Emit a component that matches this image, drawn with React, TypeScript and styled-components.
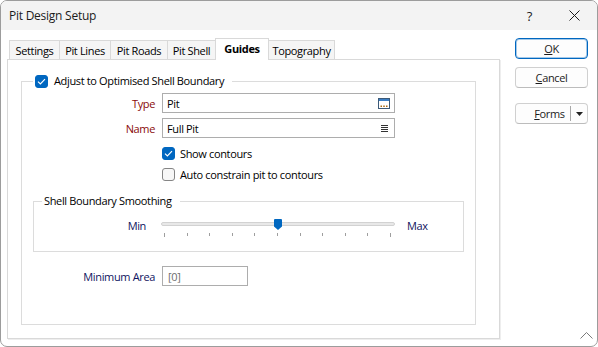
import React from 'react';
import styled, { createGlobalStyle } from 'styled-components';

const Global = createGlobalStyle`
  html, body { margin: 0; padding: 0; background: #ffffff; }
  body {
    font-family: "Open Sans", "Noto Sans", sans-serif;
    font-size: 11px;
    letter-spacing: -0.35px;
    color: #000;
  }
  * { box-sizing: border-box; }
`;

const Window = styled.div`
  position: relative;
  width: 598px;
  height: 347px;
  border: 1px solid #9c9c9c;
  border-radius: 7px;
  background: #ffffff;
  overflow: hidden;
  display: flex;
  flex-direction: column;
`;

const TitleBar = styled.div`
  height: 29px;
  flex: none;
  background: #f3f3f3;
  display: flex;
  align-items: center;
  justify-content: space-between;
  padding-left: 8px;
`;

const TitleText = styled.div`
  font-size: 12px;
  letter-spacing: -0.25px;
  color: #1b1b1b;
`;

const CaptionButtons = styled.div`
  display: flex;
  height: 100%;
`;

const CaptionButton = styled.div`
  width: 45px;
  height: 100%;
  display: flex;
  align-items: center;
  justify-content: center;
  font-size: 13px;
  color: #1b1b1b;
`;

const Body = styled.div`
  flex: 1;
  display: flex;
  padding: 8px 0 0 6px;
  gap: 15px;
`;

const LeftCol = styled.div`
  width: 493px;
  display: flex;
  flex-direction: column;
`;

const TabStrip = styled.div`
  height: 21px;
  display: flex;
  align-items: flex-end;
  padding-left: 2px;
  position: relative;
  z-index: 1;
`;

const Tab = styled.div<{ $w: number; $active?: boolean }>`
  width: ${(p) => p.$w}px;
  height: ${(p) => (p.$active ? 22 : 19)}px;
  margin-left: -1px;
  margin-bottom: ${(p) => (p.$active ? -1 : 0)}px;
  border: 1px solid #d9d9d9;
  border-bottom: none;
  background: ${(p) => (p.$active ? '#ffffff' : '#f5f5f5')};
  font-weight: ${(p) => (p.$active ? 700 : 400)};
  display: flex;
  align-items: center;
  justify-content: center;
  padding-bottom: ${(p) => (p.$active ? 2 : 0)}px;
  position: relative;
  z-index: ${(p) => (p.$active ? 2 : 1)};
  &:first-child { margin-left: 0; }
`;

const Panel = styled.div`
  height: 280px;
  border: 1px solid #d9d9d9;
  box-shadow: 1px 1px 0 #eeeeee;
  padding: 14px 0 0 13px;
`;

const GroupBox = styled.fieldset<{ $w: number; $pad: string }>`
  margin: 0;
  min-width: 0;
  width: ${(p) => p.$w}px;
  border: 1px solid #dcdcdc;
  padding: ${(p) => p.$pad};
`;

const Legend = styled.legend<{ $ml: number; $pl: number }>`
  margin-left: ${(p) => p.$ml}px;
  padding: 0 8px 0 ${(p) => p.$pl}px;
  height: 14px;
  line-height: 14px;
  display: flex;
  align-items: center;
  gap: 6px;
  color: #000;
`;

const Row = styled.div<{ $mt?: number }>`
  display: grid;
  grid-template-columns: 122px auto;
  column-gap: 7px;
  align-items: center;
  margin-top: ${(p) => p.$mt ?? 0}px;
`;

const Label = styled.div<{ $tone?: 'req' | 'opt' }>`
  text-align: right;
  color: ${(p) => (p.$tone === 'req' ? '#8a0a0a' : p.$tone === 'opt' ? '#0f1460' : '#000')};
`;

const Field = styled.div<{ $w: number; $muted?: boolean }>`
  width: ${(p) => p.$w}px;
  height: 20px;
  border: 1px solid #adadad;
  background: #fff;
  display: flex;
  align-items: center;
  justify-content: space-between;
  padding: 0 4px 0 4px;
  color: ${(p) => (p.$muted ? '#6d6d6d' : '#000')};
`;

const FieldText = styled.span<{ $pl?: number }>`
  padding-left: ${(p) => p.$pl ?? 0}px;
`;

const CheckLine = styled.label`
  height: 16px;
  display: flex;
  align-items: center;
  gap: 5px;
`;

const Box = styled.span<{ $on?: boolean }>`
  width: 13px;
  height: 13px;
  border-radius: 3px;
  flex: none;
  display: flex;
  align-items: center;
  justify-content: center;
  background: ${(p) => (p.$on ? '#0067c0' : '#f7f7f7')};
  border: 1px solid ${(p) => (p.$on ? '#0067c0' : '#858585')};
`;

const SliderRow = styled.div`
  display: grid;
  grid-template-columns: 112px 234px auto;
  column-gap: 15px;
  align-items: start;
`;

const SliderLabel = styled.div<{ $align: 'left' | 'right' }>`
  text-align: ${(p) => p.$align};
  line-height: 16px;
  margin-top: 1px;
  margin-left: ${(p) => (p.$align === 'left' ? -3 : 0)}px;
  color: #0f1460;
`;

const Slider = styled.div`
  position: relative;
  height: 21px;
  padding-top: 5px;
`;

const Track = styled.div`
  height: 4px;
  border: 1px solid #d2d2d2;
  background: #e8e8e8;
  border-radius: 2px;
`;

const Ticks = styled.div`
  margin-top: 7px;
  height: 4px;
  display: flex;
  justify-content: space-between;
  align-items: flex-start;
  padding: 0 4px 0 3px;
`;

const Tick = styled.span<{ $long?: boolean }>`
  width: 1px;
  height: ${(p) => (p.$long ? 4 : 3)}px;
  background: #9e9e9e;
`;

const Thumb = styled.svg`
  position: absolute;
  top: 2px;
  left: calc(50% - 4px);
`;

const ButtonCol = styled.div`
  width: 73px;
  display: flex;
  flex-direction: column;
`;

const Button = styled.div<{ $primary?: boolean; $mt?: number }>`
  height: 21px;
  margin-top: ${(p) => p.$mt ?? 0}px;
  border: 1px solid ${(p) => (p.$primary ? '#0067c0' : '#d0d0d0')};
  border-bottom-color: ${(p) => (p.$primary ? '#0067c0' : '#bcbcbc')};
  box-shadow: ${(p) => (p.$primary ? 'inset 0 0 0 1px rgba(0,103,192,0.35)' : 'none')};
  border-radius: 4px;
  background: #fdfdfd;
  display: flex;
  align-items: center;
  justify-content: center;
  color: #1b1b1b;
`;

const SplitMain = styled.span`
  flex: 1;
  text-align: center;
  padding-left: 13px;
`;

const SplitSep = styled.span`
  width: 1px;
  height: 15px;
  background: #a8a8a8;
`;

const SplitArrow = styled.span`
  width: 16px;
  display: flex;
  justify-content: center;
`;

const Grip = styled.svg`
  position: absolute;
  right: 4px;
  bottom: 7px;
`;

const Spacer = styled.div<{ $mt: number }>`
  margin-top: ${(p) => p.$mt}px;
`;

const Check = () => (
  <svg width="9" height="7" viewBox="0 0 9 7">
    <path d="M1 3.6 L3.4 6 L8 1.2" stroke="#fff" strokeWidth="1.2" fill="none" />
  </svg>
);

const BrowseIcon = () => (
  <svg width="12" height="11" viewBox="0 0 12 11">
    <rect x="0.5" y="0.5" width="11" height="10" fill="#fff" stroke="#3d5a78" />
    <rect x="1" y="1" width="10" height="2" fill="#3b7ec4" />
    <rect x="2.5" y="7.5" width="1.5" height="1.5" fill="#a86a12" />
    <rect x="5.25" y="7.5" width="1.5" height="1.5" fill="#a86a12" />
    <rect x="8" y="7.5" width="1.5" height="1.5" fill="#a86a12" />
  </svg>
);

const ListIcon = () => (
  <svg width="7" height="7" viewBox="0 0 7 7" style={{ marginRight: 2 }}>
    <rect x="0" y="0" width="7" height="1" fill="#333" />
    <rect x="0" y="2" width="7" height="1" fill="#333" />
    <rect x="0" y="4" width="7" height="1" fill="#333" />
    <rect x="0" y="6" width="7" height="1" fill="#333" />
  </svg>
);

const tabs: [string, number][] = [
  ['Settings', 51],
  ['Pit Lines', 52],
  ['Pit Roads', 58],
  ['Pit Shell', 49],
  ['Guides', 54],
  ['Topography', 67],
];

export default function App() {
  return (
    <>
      <Global />
      <Window>
        <TitleBar>
          <TitleText>Pit Design Setup</TitleText>
          <CaptionButtons>
            <CaptionButton>?</CaptionButton>
            <CaptionButton>
              <svg width="11" height="11" viewBox="0 0 11 11">
                <path d="M0.5 0.5 L10.5 10.5 M10.5 0.5 L0.5 10.5" stroke="#1b1b1b" strokeWidth="1" />
              </svg>
            </CaptionButton>
          </CaptionButtons>
        </TitleBar>
        <Body>
          <LeftCol>
            <TabStrip>
              {tabs.map(([t, w]) => (
                <Tab key={t} $w={w} $active={t === 'Guides'}>
                  {t}
                </Tab>
              ))}
            </TabStrip>
            <Panel>
              <GroupBox $w={455} $pad="5px 12px 38px 11px">
                <Legend $ml={0} $pl={2}>
                  <Box $on>
                    <Check />
                  </Box>
                  Adjust to Optimised Shell Boundary
                </Legend>
                <Row>
                  <Label $tone="req">Type</Label>
                  <Field $w={233}>
                    <FieldText>Pit</FieldText>
                    <BrowseIcon />
                  </Field>
                </Row>
                <Row $mt={5}>
                  <Label $tone="req">Name</Label>
                  <Field $w={233}>
                    <FieldText>Full Pit</FieldText>
                    <ListIcon />
                  </Field>
                </Row>
                <Row $mt={7}>
                  <span />
                  <CheckLine>
                    <Box $on>
                      <Check />
                    </Box>
                    Show contours
                  </CheckLine>
                </Row>
                <Row $mt={5}>
                  <span />
                  <CheckLine>
                    <Box />
                    Auto constrain pit to contours
                  </CheckLine>
                </Row>
                <Spacer $mt={12}>
                  <GroupBox $w={431} $pad="9px 0 13px 0">
                    <Legend $ml={8} $pl={2}>
                      Shell Boundary Smoothing
                    </Legend>
                    <SliderRow>
                      <SliderLabel $align="right">Min</SliderLabel>
                      <Slider>
                        <Track />
                        <Ticks>
                          {Array.from({ length: 11 }).map((_, i) => (
                            <Tick key={i} $long={i === 0 || i === 10} />
                          ))}
                        </Ticks>
                        <Thumb width="8" height="11" viewBox="0 0 8 11">
                          <path d="M1 0 H7 A1 1 0 0 1 8 1 V7.5 L4 11 L0 7.5 V1 A1 1 0 0 1 1 0 Z" fill="#0067c0" />
                        </Thumb>
                      </Slider>
                      <SliderLabel $align="left">Max</SliderLabel>
                    </SliderRow>
                  </GroupBox>
                </Spacer>
                <Row $mt={14}>
                  <Label $tone="opt">Minimum Area</Label>
                  <Field $w={86} $muted>
                    <FieldText $pl={1}>[0]</FieldText>
                  </Field>
                </Row>
              </GroupBox>
            </Panel>
          </LeftCol>
          <ButtonCol>
            <Button $primary>
              <span>
                <u>O</u>K
              </span>
            </Button>
            <Button $mt={8}>
              <span>
                <u>C</u>ancel
              </span>
            </Button>
            <Button $mt={15}>
              <SplitMain>
                <u>F</u>orms
              </SplitMain>
              <SplitSep />
              <SplitArrow>
                <svg width="7" height="4" viewBox="0 0 7 4">
                  <path d="M0 0 H7 L3.5 4 Z" fill="#222" />
                </svg>
              </SplitArrow>
            </Button>
          </ButtonCol>
        </Body>
        <Grip width="13" height="7" viewBox="0 0 13 7">
          <path d="M0.5 6.5 L6.5 0.5 L12.5 6.5" stroke="#7a7a7a" strokeWidth="1" fill="none" />
        </Grip>
      </Window>
    </>
  );
}
